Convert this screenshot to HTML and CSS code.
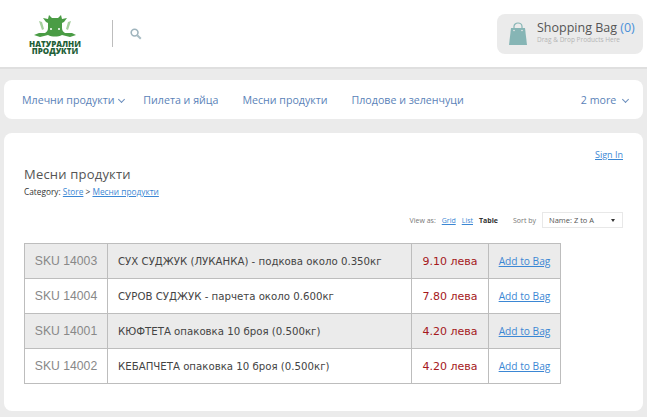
FILE: index.html
```html
<!DOCTYPE html>
<html lang="bg">
<head>
  <meta charset="UTF-8" />
  <meta name="viewport" content="width=device-width, initial-scale=1.0">
  <title>Месни продукти</title>
  <link rel="stylesheet" href="styles.css">
</head>
<body>
<header class="header">
  <a class="logo" href="#">
    <svg class="logo-cow" width="42" height="23" viewBox="0 0 42 23">
      <path fill="#a5cf9d" d="M5 7l3 1 2 7-2 1zM37 7l-3 1-2 7 2 1z"/>
      <path fill="#4a9c45" d="M9 4L14 5 15 1 18 4H24L27 1 28 5 33 4 30 8 28 9V14C28 16 29 18 31 19L38 19 42 21 36 23 28 21C24 23 18 23 14 21L6 23 0 21 5 19 11 19C13 18 14 16 14 14V9L12 8Z"/>
      <circle cx="17" cy="15" r="1" fill="#fff"/>
      <circle cx="25" cy="15" r="1" fill="#fff"/>
    </svg>
    <span class="logo-text">НАТУРАЛНИ<br>ПРОДУКТИ</span>
  </a>
  <div class="divider"></div>
  <svg class="search-icon" width="12" height="12" viewBox="0 0 12 12">
    <circle cx="4.600" cy="4.600" r="3.400" fill="none" stroke="#9fb4bd" stroke-width="1.600"/>
    <path d="M7.200 7.200l3.600 3.600" stroke="#a9bdc4" stroke-width="2"/>
  </svg>
  <div class="bag">
    <svg class="bag-icon" width="18" height="23" viewBox="0 0 18 23">
      <path fill="none" stroke="#86b5b5" stroke-width="1.200" d="M5 8V4.500C5 2.500 6.800 1 9 1s4 1.500 4 3.500V8"/>
      <path fill="#86b5b5" d="M2 6h14l2 17H0z"/>
      <circle cx="5" cy="8.500" r=".8" fill="#ebebeb"/>
      <circle cx="13" cy="8.500" r=".8" fill="#ebebeb"/>
    </svg>
    <div class="bag-text">
      <div class="bag-title">Shopping Bag <span class="bag-count">(0)</span></div>
      <div class="bag-hint">Drag &amp; Drop Products Here</div>
    </div>
  </div>
</header>

<nav class="nav">
  <a href="#">Млечни продукти <span class="chev"></span></a>
  <a href="#">Пилета и яйца</a>
  <a href="#">Месни продукти</a>
  <a href="#">Плодове и зеленчуци</a>
  <a class="more" href="#">2 more <span class="chev"></span></a>
</nav>

<main class="content">
  <div class="signin"><a href="#">Sign In</a></div>
  <h1>Месни продукти</h1>
  <div class="crumbs">Category: <a href="#">Store</a> &gt; <a href="#">Месни продукти</a></div>
  <div class="tools">
    <span>View as:</span>
    <a href="#">Grid</a>
    <a href="#">List</a>
    <b>Table</b>
    <span class="sort-label">Sort by</span>
    <div class="sort">Name: Z to A <span class="arrow"></span></div>
  </div>
  <table class="products">
    <tr>
      <td class="sku">SKU 14003</td>
      <td class="name">СУХ СУДЖУК (ЛУКАНКА) - подкова около 0.350кг</td>
      <td class="price">9.10 лева</td>
      <td class="add"><a href="#">Add to Bag</a></td>
    </tr>
    <tr>
      <td class="sku">SKU 14004</td>
      <td class="name">СУРОВ СУДЖУК - парчета около 0.600кг</td>
      <td class="price">7.80 лева</td>
      <td class="add"><a href="#">Add to Bag</a></td>
    </tr>
    <tr>
      <td class="sku">SKU 14001</td>
      <td class="name">КЮФТЕТА опаковка 10 броя (0.500кг)</td>
      <td class="price">4.20 лева</td>
      <td class="add"><a href="#">Add to Bag</a></td>
    </tr>
    <tr>
      <td class="sku">SKU 14002</td>
      <td class="name">КЕБАПЧЕТА опаковка 10 броя (0.500кг)</td>
      <td class="price">4.20 лева</td>
      <td class="add"><a href="#">Add to Bag</a></td>
    </tr>
  </table>
</main>
</body>
</html>
```

FILE: styles.css
```css
body {
  margin: 0;
  background: #ebebeb;
  font-family: 'Open Sans', sans-serif;
  color: #444;
  overflow: hidden;
}
a {
  color: #3b87d4;
}
.header {
  display: flex;
  align-items: center;
  height: 67px;
  padding: 0 4px 0 27px;
  background: #fff;
  border-bottom: 2px solid #dfdfdf;
}
.logo {
  display: flex;
  flex-direction: column;
  align-items: center;
  gap: 3px;
  width: 56px;
  text-decoration: none;
}
.logo-text {
  font-size: 8px;
  line-height: 7px;
  font-weight: 800;
  color: #1f5f38;
  text-align: center;
}
.divider {
  width: 1px;
  height: 27px;
  margin-left: 29px;
  background: #bdbdbd;
}
.search-icon {
  margin-left: 17px;
}
.bag {
  display: flex;
  align-items: center;
  gap: 10px;
  width: 146px;
  height: 40px;
  margin-left: auto;
  box-sizing: border-box;
  padding: 0 0 0 12px;
  background: #ebebeb;
  border-radius: 8px;
}
.bag-text {
  margin-top: -3px;
}
.bag-title {
  font-size: 12.500px;
  line-height: 16px;
  color: #555;
}
.bag-count {
  color: #4a90d9;
}
.bag-hint {
  font-size: 6.500px;
  line-height: 8px;
  color: #b5b5b5;
}
.nav {
  display: flex;
  align-items: center;
  gap: 24px;
  height: 39px;
  margin: 11px 4px 14px;
  padding: 0 14px 0 18px;
  background: #fff;
  border-radius: 8px;
  font-size: 10.650px;
}
.nav a {
  color: #5a82b8;
  text-decoration: none;
}
.nav a:first-child {
  margin-right: -6px;
}
.nav .more {
  margin-left: auto;
}
.nav .more .chev {
  margin-left: 4px;
}
.chev {
  display: inline-block;
  width: 4px;
  height: 4px;
  margin: 0 1px 2px 2px;
  border-right: 1px solid #6c8fbd;
  border-bottom: 1px solid #6c8fbd;
  transform: rotate(45deg);
}
.content {
  height: 278px;
  margin: 0 4px;
  box-sizing: border-box;
  padding: 16px 20px 0;
  background: #fff;
  border-radius: 8px;
}
.signin {
  text-align: right;
  font-size: 9px;
  line-height: 12px;
}
h1 {
  margin: 4px 0 0;
  font-size: 13px;
  line-height: 18px;
  font-weight: 400;
  color: #555;
  letter-spacing: 0.2px;
}
.crumbs {
  margin-top: 3px;
  font-size: 8.300px;
  line-height: 12px;
  color: #333;
}
.tools {
  display: flex;
  align-items: center;
  justify-content: flex-end;
  gap: 6px;
  margin-top: 14px;
  height: 16px;
  font-size: 7px;
  color: #777;
}
.tools b {
  color: #333;
}
.sort-label {
  margin-left: 9px;
}
.sort {
  display: flex;
  align-items: center;
  justify-content: space-between;
  width: 81px;
  height: 16px;
  box-sizing: border-box;
  padding: 0 7px 0 6px;
  border: 1px solid #e8e8e8;
  font-size: 7.500px;
  color: #555;
}
.arrow {
  width: 0;
  height: 0;
  border-left: 2px solid transparent;
  border-right: 2px solid transparent;
  border-top: 3px solid #333;
}
.products {
  width: 537px;
  margin-top: 15px;
  border-collapse: collapse;
  border: 1px solid #bdbdbd;
  table-layout: fixed;
}
.products tr {
  height: 35px;
}
.products tr:nth-child(odd) {
  background: #ebebeb;
}
.products td {
  padding: 0;
  border: 1px solid #bdbdbd;
}
.sku {
  width: 82px;
  text-align: center;
  font-family: 'Liberation Sans', sans-serif;
  font-size: 12.200px;
  color: #888;
}
.name {
  padding-left: 10px !important;
  font-family: 'DejaVu Sans', sans-serif;
  font-size: 10.200px;
  color: #444;
}
.price {
  width: 76px;
  text-align: center;
  font-family: 'DejaVu Sans', sans-serif;
  font-size: 11px;
  color: #a5181c;
}
.add {
  width: 71px;
  text-align: center;
  font-size: 10.200px;
}
```
